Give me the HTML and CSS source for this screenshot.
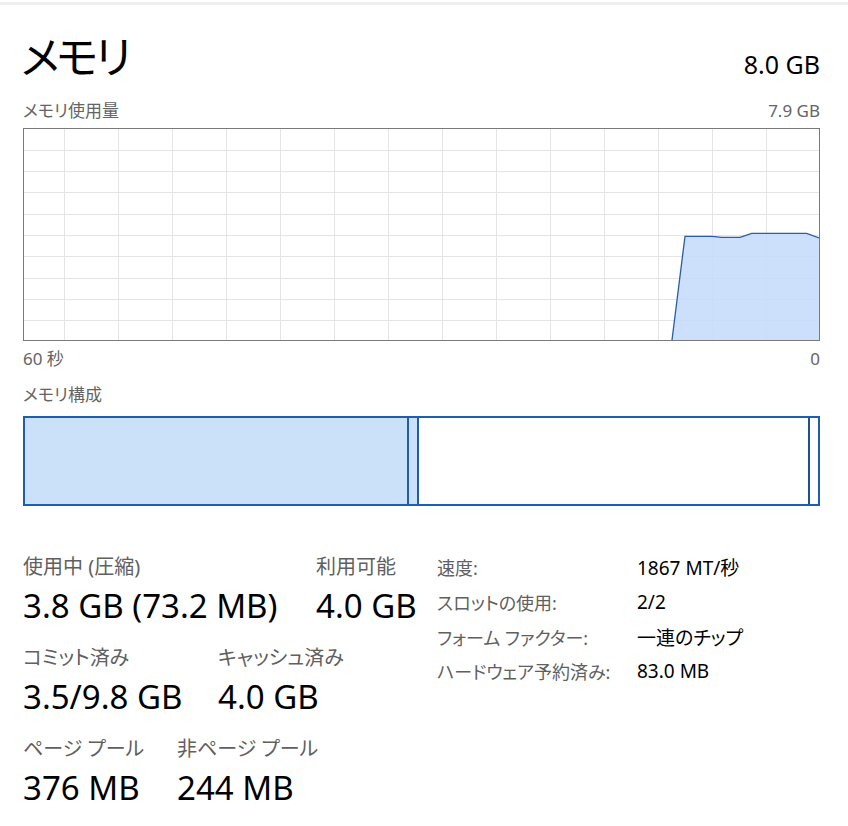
FILE: index.html
```html
<!DOCTYPE html>
<html lang="ja">
<head>
<meta charset="utf-8">
<title>メモリ</title>
<link rel="stylesheet" href="styles.css">
</head>
<body>
<div class="topband"></div>
<main class="panel">
  <header class="hdr">
    <h1 class="title">メモリ</h1>
    <div class="total">8.0 GB</div>
  </header>

  <div class="caption-row cap-usage">
    <span>メモリ使用量</span>
    <span>7.9 GB</span>
  </div>

  <div class="graph">
    <svg width="795" height="211" viewBox="0 0 795 211">
      <g stroke="#e4e4e4" stroke-width="1" shape-rendering="crispEdges">
        <line x1="40.5" y1="0" x2="40.5" y2="211"/>
        <line x1="94.5" y1="0" x2="94.5" y2="211"/>
        <line x1="148.5" y1="0" x2="148.5" y2="211"/>
        <line x1="202.5" y1="0" x2="202.5" y2="211"/>
        <line x1="256.5" y1="0" x2="256.5" y2="211"/>
        <line x1="310.5" y1="0" x2="310.5" y2="211"/>
        <line x1="364.5" y1="0" x2="364.5" y2="211"/>
        <line x1="418.5" y1="0" x2="418.5" y2="211"/>
        <line x1="472.5" y1="0" x2="472.5" y2="211"/>
        <line x1="526.5" y1="0" x2="526.5" y2="211"/>
        <line x1="580.5" y1="0" x2="580.5" y2="211"/>
        <line x1="634.5" y1="0" x2="634.5" y2="211"/>
        <line x1="688.5" y1="0" x2="688.5" y2="211"/>
        <line x1="742.5" y1="0" x2="742.5" y2="211"/>
        <line x1="0" y1="21.5" x2="795" y2="21.5"/>
        <line x1="0" y1="42.5" x2="795" y2="42.5"/>
        <line x1="0" y1="63.5" x2="795" y2="63.5"/>
        <line x1="0" y1="85.5" x2="795" y2="85.5"/>
        <line x1="0" y1="106.5" x2="795" y2="106.5"/>
        <line x1="0" y1="127.5" x2="795" y2="127.5"/>
        <line x1="0" y1="149.5" x2="795" y2="149.5"/>
        <line x1="0" y1="170.5" x2="795" y2="170.5"/>
        <line x1="0" y1="191.5" x2="795" y2="191.5"/>
      </g>
      <path d="M648 211 L661 107.3 L688.3 107.3 L697.7 108.3 L716 108.3 L727.7 104.3 L782.7 104.3 L795 109 L795 211 Z" fill="#c5dcfa" fill-opacity="0.88" stroke="none"/>
      <path d="M648 211 L661 107.3 L688.3 107.3 L697.7 108.3 L716 108.3 L727.7 104.3 L782.7 104.3 L795 109" fill="none" stroke="#2a5ea8" stroke-width="1.3"/>
    </svg>
  </div>

  <div class="caption-row cap-time">
    <span>60 秒</span>
    <span>0</span>
  </div>

  <div class="caption-row cap-comp">
    <span>メモリ構成</span>
  </div>

  <div class="compbar">
    <div class="seg seg-inuse"></div>
    <div class="seg seg-modified"></div>
    <div class="seg seg-standby"></div>
    <div class="seg seg-free"></div>
  </div>

  <section class="stats">
    <div class="stats-left">
      <div class="stat-row">
        <div class="stat w-inuse">
          <div class="stat-label">使用中 (圧縮)</div>
          <div class="stat-value">3.8 GB (73.2 MB)</div>
        </div>
        <div class="stat">
          <div class="stat-label">利用可能</div>
          <div class="stat-value">4.0 GB</div>
        </div>
      </div>
      <div class="stat-row">
        <div class="stat w-commit">
          <div class="stat-label">コミット済み</div>
          <div class="stat-value">3.5/9.8 GB</div>
        </div>
        <div class="stat">
          <div class="stat-label">キャッシュ済み</div>
          <div class="stat-value">4.0 GB</div>
        </div>
      </div>
      <div class="stat-row">
        <div class="stat w-paged">
          <div class="stat-label">ページ プール</div>
          <div class="stat-value">376 MB</div>
        </div>
        <div class="stat">
          <div class="stat-label">非ページ プール</div>
          <div class="stat-value">244 MB</div>
        </div>
      </div>
    </div>

    <dl class="props">
      <dt>速度:</dt><dd>1867 MT/秒</dd>
      <dt>スロットの使用:</dt><dd>2/2</dd>
      <dt>フォーム ファクター:</dt><dd>一連のチップ</dd>
      <dt>ハードウェア予約済み:</dt><dd>83.0 MB</dd>
    </dl>
  </section>
</main>
</body>
</html>
```

FILE: styles.css
```css
* { box-sizing: border-box; }

html, body {
  margin: 0;
  padding: 0;
  background: #ffffff;
}

body {
  font-family: "Noto Sans", "Noto Sans CJK JP", sans-serif;
  font-feature-settings: "palt";
  color: #000;
}

.topband {
  margin-top: 2px;
  height: 3px;
  background: #efefef;
}

.panel {
  width: 797px;
  margin-left: 23px;
}

.hdr {
  display: flex;
  justify-content: space-between;
  align-items: baseline;
  margin-top: 27px;
  height: 50px;
}

.title {
  margin: 0 0 0 -2px;
  font-weight: 400;
  font-size: 44px;
  line-height: 50px;
  letter-spacing: -3px;
  color: #000;
}

.total {
  font-size: 25px;
  line-height: 50px;
  color: #000;
}

.caption-row {
  display: flex;
  justify-content: space-between;
  font-size: 17px;
  line-height: 20px;
  color: #646464;
}

.cap-usage { margin-top: 19px; }
.cap-time { margin-top: 8px; }
.cap-comp { margin-top: 16px; }

.graph {
  margin-top: 7px;
  width: 797px;
  height: 213px;
  border: 1px solid #7a7a7a;
}

.graph svg { display: block; }

.compbar {
  margin-top: 11px;
  display: flex;
  width: 797px;
  height: 90px;
  border: 2px solid #1f5db3;
}

.seg { height: 100%; }

.seg-inuse {
  flex: 0 0 382px;
  background: #cbe0f9;
}

.seg-modified {
  flex: 0 0 10px;
  background: #cbe0f9;
  border-left: 2px solid #1f5db3;
}

.seg-standby {
  flex: 0 0 391px;
  background: #fff;
  border-left: 2px solid #1f5db3;
}

.seg-free {
  flex: 0 0 10px;
  background: #fff;
  border-left: 2px solid #1f4f94;
}

.stats {
  display: flex;
  margin-top: 44px;
}

.stats-left {
  flex: 0 0 414px;
  padding-top: 5px;
}

.stat-row {
  display: flex;
  margin-bottom: 22px;
}

.w-inuse { flex: 0 0 293px; }
.w-commit { flex: 0 0 195px; }
.w-paged { flex: 0 0 154px; }

.stat-label {
  font-size: 20px;
  line-height: 24px;
  color: #606060;
  white-space: nowrap;
}

.stat-value {
  margin-top: 9px;
  font-size: 33px;
  line-height: 36px;
  color: #000;
  white-space: nowrap;
}

.props {
  margin: 0;
  display: grid;
  grid-template-columns: 200px auto;
  grid-auto-rows: 34.7px;
  align-items: center;
  font-size: 18px;
}

.props dt {
  color: #606060;
  white-space: nowrap;
}

.props dd {
  margin: 0;
  font-size: 19px;
  color: #000;
  white-space: nowrap;
}
```
